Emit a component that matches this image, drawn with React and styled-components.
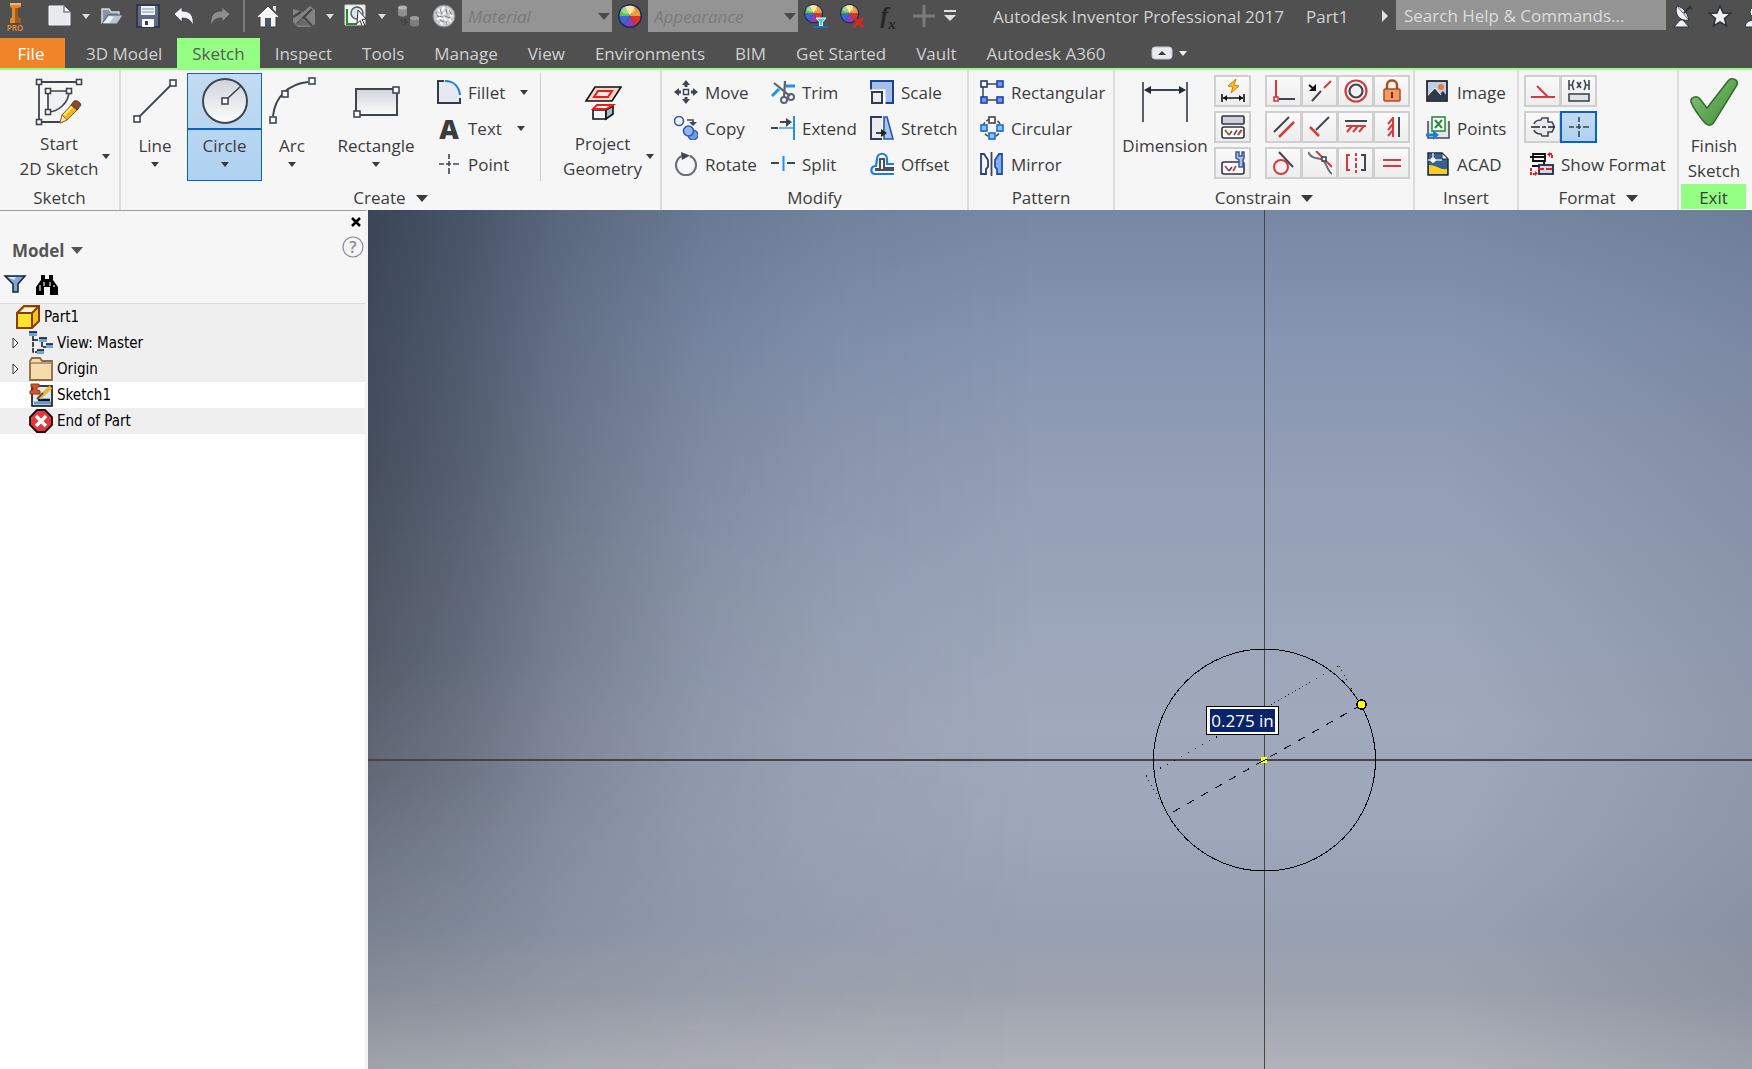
import React, { useState } from 'react';
import styled, { createGlobalStyle } from 'styled-components';

const GlobalStyle = createGlobalStyle`
    * { box-sizing: border-box; }
    body {
        margin: 0;
        overflow: hidden;
        font-family: "Open Sans", "Noto Sans", sans-serif;
        font-size: 17px;
        color: #3c3c3c;
    }
    button, input, select {
        font: inherit;
        color: inherit;
        margin: 0;
        padding: 0;
        border: 0;
        background: none;
    }
    svg { display: block; flex: none; }
`;

const Page = styled.div`
    min-height: 100vh;
    display: flex;
    flex-direction: column;
`;

/* ---------- title bar ---------- */

const TitleBar = styled.header`
    display: flex;
    align-items: flex-start;
    height: 38px;
    background: #505050;
    color: #d2d2d2;
    overflow: hidden;
    white-space: nowrap;
`;

const Logo = styled.div`
    width: 42px;
    height: 32px;
    flex: none;
    padding-left: 6px;
    display: flex;
    align-items: center;
`;

const QuickButton = styled.button`
    width: ${(p) => (p.$arrow ? 16 : 36)}px;
    height: 32px;
    flex: none;
    display: flex;
    align-items: center;
    justify-content: center;
`;

const QuickDivider = styled.span`
    width: 2px;
    height: 32px;
    margin: 0 5px;
    flex: none;
    background: #7d7d7d;
`;

const Parameters = styled.span`
    font-family: "Liberation Serif", serif;
    font-style: italic;
    font-weight: 700;
    font-size: 24px;
    line-height: 28px;
    color: #262626;

    sub {
        font-size: 15px;
        line-height: 1;
    }
`;

const Combo = styled.label`
    position: relative;
    width: 150px;
    height: 32px;
    flex: none;

    select {
        width: 100%;
        height: 100%;
        padding-left: 6px;
        appearance: none;
        background: #949494;
        color: #7a7a7a;
        font-style: italic;
        opacity: 1;
    }
    svg {
        position: absolute;
        right: 2px;
        top: 13px;
        pointer-events: none;
    }
`;

const DocTitle = styled.div`
    display: flex;
    gap: 22px;
    margin-left: 35px;
    line-height: 33px;
`;

const SearchArea = styled.div`
    display: flex;
    align-items: center;
    margin-left: auto;
    width: 370px;
    flex: none;
`;

const SearchInput = styled.input`
    width: 270px;
    height: 30px;
    flex: none;
    margin-left: 8px;
    padding-left: 8px;
    background: #949494;
    align-self: flex-start;

    &::placeholder {
        color: #dcdcdc;
        opacity: 1;
    }
`;

/* ---------- tabs ---------- */

const TabBar = styled.nav`
    display: flex;
    height: 32px;
    background: #505050;
    border-bottom: 2px solid #93ff83;
`;

const Tab = styled.button`
    padding: 0 15px;
    line-height: 31px;
    color: ${(p) => (p.$active ? '#5a5a5a' : '#cfcfcf')};
    background: ${(p) => (p.$active ? '#93ff83' : 'transparent')};
    white-space: nowrap;
`;

const FileTab = styled(Tab)`
    width: 65px;
    padding: 0 18px 0 15px;
    margin-right: 6px;
    background: #f08428;
    color: #fff;
`;

const RibbonToggle = styled.button`
    display: flex;
    align-items: center;
    gap: 6px;
    margin-left: 31px;
`;

/* ---------- ribbon ---------- */

const Ribbon = styled.div`
    display: flex;
    height: 140px;
    background: #f6f6f6;
`;

const Group = styled.section`
    width: ${(p) => p.$w}px;
    flex: ${(p) => (p.$grow ? '1 0 auto' : 'none')};
    display: flex;
    flex-direction: column;
    border-right: ${(p) => (p.$grow ? 0 : 2)}px solid #dcdcdc;
`;

const GroupBody = styled.div`
    display: flex;
    height: 114px;
    padding: 3px 0 3px ${(p) => p.$pad || 0}px;
`;

const GroupTitle = styled.div`
    display: flex;
    align-items: center;
    justify-content: center;
    gap: 10px;
    height: 25px;
    padding-top: 3px;
    line-height: 22px;
    background: ${(p) => (p.$exit ? '#93ff83' : 'transparent')};
    margin: ${(p) => (p.$exit ? '0 6px 0 2px' : '0')};
`;

const Tool = styled.div`
    width: ${(p) => p.$w}px;
    flex: none;
    display: flex;
    flex-direction: column;
    background: ${(p) => (p.$active ? 'linear-gradient(#c3dbf3, #aed1f0)' : 'transparent')};
    outline: ${(p) => (p.$active ? '1px solid #0a62c4' : 'none')};
    outline-offset: -1px;
`;

const ToolIcon = styled.button`
    height: 57px;
    display: flex;
    align-items: center;
    justify-content: center;
    border-bottom: 2px solid ${(p) => (p.$active ? '#0a62c4' : 'transparent')};
`;

const ToolLabel = styled.button`
    flex: 1;
    display: flex;
    flex-direction: column;
    align-items: center;
    gap: 4px;
    padding-top: 3px;
    line-height: 25px;
`;

const BigTool = styled.button`
    width: ${(p) => p.$w}px;
    flex: none;
    display: flex;
    flex-direction: column;
    align-items: center;
    line-height: 25px;
    padding-top: 5px;
    white-space: nowrap;
`;

const BigIcon = styled.span`
    height: 48px;
    display: flex;
    align-items: center;
`;

/* the menu arrow hangs outside the box so that the text stays centred */
const BigLabel = styled.span`
    margin-top: ${(p) => p.$gap || 5}px;
    display: flex;
    align-items: center;
    gap: 4px;

    svg { margin-right: -12px; }
`;

const SmallColumn = styled.div`
    width: ${(p) => p.$w}px;
    margin-left: ${(p) => p.$left || 0}px;
    flex: none;
    padding-top: 1px;
`;

const SmallTool = styled.button`
    display: flex;
    align-items: center;
    height: 36px;
    gap: 7px;
    white-space: nowrap;

    span + svg { margin-left: 8px; }
`;

const LetterIcon = styled.span`
    width: 24px;
    font-size: 27px;
    font-weight: 800;
    text-align: center;
`;

const Separator = styled.span`
    width: 1px;
    height: 108px;
    margin-right: 4px;
    flex: none;
    background: #cdcdcd;
`;

const FormatTools = styled.div`
    display: flex;
    flex-direction: column;
    gap: 2px;
`;

const ButtonGrid = styled.div`
    display: grid;
    grid-template-columns: repeat(${(p) => p.$cols}, 36px);
    grid-auto-rows: 32px;
    gap: 4px 0;
    padding-top: 2px;
    margin-left: ${(p) => p.$left || 0}px;
    align-content: start;
`;

const GridButton = styled.button`
    margin-right: -1px;
    display: flex;
    align-items: center;
    justify-content: center;
    position: relative;
    z-index: ${(p) => (p.$active ? 1 : 0)};
    border: 2px solid ${(p) => (p.$active ? '#0a62c4' : '#cfcfcf')};
    background: ${(p) => (p.$active ? 'linear-gradient(#c3dbf3, #aed1f0)' : 'linear-gradient(#fafafa, #ededed)')};
`;

/* ---------- browser panel ---------- */

const Workspace = styled.main`
    flex: 1;
    display: flex;
`;

const Browser = styled.aside`
    width: 368px;
    flex: none;
    border-top: 1px solid #9c9c9c;
    border-right: 3px solid #f3f3f3;
    background: #fff;
`;

const BrowserHead = styled.div`
    height: 93px;
    padding: 6px 1px 0 12px;
    background: #f6f6f6;
    border-bottom: 1px solid #dcdcdc;
`;

const HeadRow = styled.div`
    display: flex;
    align-items: center;
    justify-content: ${(p) => (p.$end ? 'flex-end' : 'space-between')};
    height: ${(p) => p.$h}px;
    padding-right: ${(p) => (p.$end ? 3 : 0)}px;
`;

const ModelMenu = styled.button`
    display: flex;
    align-items: center;
    gap: 6px;
    padding-top: 6px;
    font-weight: 700;
    font-size: 17px;
    color: #555;
`;

const HeadTools = styled.div`
    display: flex;
    gap: 8px;
    margin: 6px 0 0 -9px;
`;

const Tree = styled.ul`
    list-style: none;
    margin: 0;
    padding: 0;
    color: #000;
    font-family: "DejaVu Sans Condensed", "Noto Sans", sans-serif;
    font-size: 15px;
`;

const TreeRow = styled.li`
    display: flex;
    align-items: center;
    gap: 4px;
    height: 26px;
    padding-left: ${(p) => (p.$root ? 16 : 12)}px;
    background: ${(p) => (p.$plain ? '#fff' : '#efefef')};
`;

const Expander = styled.button`
    width: 13px;
    height: 20px;
    display: flex;
    align-items: center;
`;

/* ---------- graphics window ---------- */

const Viewport = styled.div`
    flex: 1;
    position: relative;
    overflow: hidden;
    background:
        linear-gradient(to right, rgba(60, 70, 90, 0) 78%, rgba(60, 70, 90, 0.16) 100%),
        linear-gradient(#7888a4 0%, #8695b1 15%, #929eb5 30%, #9ca6ba 48%, #a1a9bc 60%, #9ea7b9 72%, #98a1b2 84%, #9ea3ae 91%, #b0b3bb 100%);

    &::before {
        content: '';
        position: absolute;
        inset: 0;
        background: linear-gradient(to right, rgba(10, 16, 24, 0.56), rgba(14, 22, 32, 0.46) 7%, rgba(20, 30, 42, 0.31) 14%, rgba(30, 42, 60, 0.16) 24%, rgba(40, 54, 74, 0.07) 34%, rgba(50, 60, 80, 0) 48%);
        mask-image: linear-gradient(#000 30%, rgba(0, 0, 0, 0.9) 52%, rgba(0, 0, 0, 0.74) 66%, rgba(0, 0, 0, 0.5) 78%, rgba(0, 0, 0, 0.3) 88%, rgba(0, 0, 0, 0.16) 100%);
    }
`;

const Drawing = styled.svg`
    position: absolute;
    inset: 0;
    width: 100%;
    height: 100%;
`;

const DimensionInput = styled.input`
    position: absolute;
    left: 839px;
    top: 497px;
    width: 71px;
    height: 27px;
    border: solid #fff;
    border-width: 2px 3px;
    box-shadow: 0 0 0 1px #000;
    background: #0a246a;
    color: #fff;
    font-size: 17px;
    text-align: center;
`;

/* ---------- icons ---------- */

const ink = '#3f4652';
const red = '#d9393a';
const blue = '#1e90f0';

const Svg = ({ w = 24, h = w, box, children }) => (
    <svg width={w} height={h} viewBox={box || `0 0 ${w} ${h}`} fill="none" stroke={ink} strokeWidth="2" aria-hidden="true">
        {children}
    </svg>
);

const Down = ({ w = 8, color = '#3a3a3a' }) => (
    <svg width={w} height={w / 2 + 1} viewBox="0 0 8 4" preserveAspectRatio="none" aria-hidden="true">
        <path d="M0 0h8L4 4z" fill={color} />
    </svg>
);

const Node = ({ x, y, s = 5, fill = '#fff', stroke = ink }) => (
    <rect x={x - s / 2} y={y - s / 2} width={s} height={s} fill={fill} stroke={stroke} strokeWidth="1.6" />
);

const wheelSlices = [
    ['#f4e06a', 'M6.750 2.900A10.500 10.500 0 0 1 17.250 2.900'],
    ['#ef9a3c', 'M17.250 2.900A10.500 10.500 0 0 1 22.500 12'],
    ['#e0302a', 'M22.500 12A10.500 10.500 0 0 1 17.250 21.100'],
    ['#8a3fb4', 'M17.250 21.100A10.500 10.500 0 0 1 6.750 21.100'],
    ['#3a63dc', 'M6.750 21.100A10.500 10.500 0 0 1 1.500 12'],
    ['#64c04a', 'M1.500 12A10.500 10.500 0 0 1 6.750 2.900'],
];

const ColorWheel = ({ small, children }) => (
    <Svg>
        <g stroke="none" transform={small ? 'scale(0.8)' : undefined}>
            <circle cx="12" cy="12" r="12" fill="#1b2c55" />
            {wheelSlices.map(([fill, arc]) => <path key={fill} d={`${arc}L12 12z`} fill={fill} />)}
            <ellipse cx="10" cy="6" rx="7" ry="4" fill="#fff" opacity="0.400" />
        </g>
        {children}
    </Svg>
);

const icons = {
    logo: (
        <svg width="20" height="32" viewBox="0 0 20 32" aria-hidden="true">
            <path d="M4 3h11v4l-3 1v9l3 2v4H4v-4l2-2V8L4 7z" fill="#e08a2e" />
            <path d="M9 8h3v9l3 2v4H9z" fill="#a85a14" />
            <path d="M4 3h11v2H4z" fill="#f6b266" />
            <text x="9" y="31" textAnchor="middle" fontSize="8" fontWeight="600" fill="#f08c2c">PRO</text>
        </svg>
    ),
    newFile: <Svg><path d="M1 2h15l6 6v13H1z" fill="#e6e9ee" stroke="#f5f5f5" strokeWidth="1" /><path d="M16 2v6h6" fill="#fff" stroke="#7b828d" strokeWidth="1.500" /></Svg>,
    open: <Svg><path d="M2 20V5h7l2 3h8v3" fill="#8a93a3" stroke="#d5d9df" strokeWidth="1.500" /><path d="M2 20l6-9h15l-6 9z" fill="#b9c3d3" stroke="#4a5464" strokeWidth="1" /><path d="M3 19l6-7 5 1-5 6z" fill="#eef1f5" stroke="none" /></Svg>,
    save: <Svg><path d="M1 1h22v22H1z" fill="#5f6b82" stroke="#313a4d" /><path d="M5 2h14v9H5z" fill="#eef1f5" stroke="none" /><path d="M6 5h12M6 8h12" stroke="#8c95a5" strokeWidth="1" /><path d="M6 15h12v8H6z" fill="#fff" stroke="none" /><path d="M9 17h3v4H9z" fill="#313a4d" stroke="none" /></Svg>,
    undo: <Svg><path d="M2 10l8-7v4c9 0 12 5 11 15-2-6-5-8-11-8v4z" fill="#f2f3f5" stroke="#3a3f48" strokeWidth="0.800" /></Svg>,
    redo: <Svg><path d="M22 10l-8-7v4C5 7 2 12 3 22c2-6 5-8 11-8v4z" fill="#8d8d8d" stroke="#474747" strokeWidth="0.800" /></Svg>,
    home: <Svg><path d="M1 13L12 2l11 11h-3v10H4V13z" fill="#f4f4f5" stroke="#343a45" strokeWidth="1" /><path d="M17 2h3v6l-3-3z" fill="#e4e4e6" stroke="none" /><path d="M9 14h6v9H9z" fill="#4f5663" stroke="none" /><path d="M2 13L12 4l10 9" stroke="#fff" strokeWidth="1.500" /></Svg>,
    sketchGrey: <Svg><path d="M1 5l10 3 7-6 5 4v14l-4 3H6l-5-5z" fill="#838383" stroke="none" /><path d="M5 20L20 5M11 12l9 10M1 13l8-5" stroke="#444" strokeWidth="2.200" /><path d="M4 21l14 1-8-8z" fill="#686868" stroke="none" /></Svg>,
    select: <Svg><path d="M1 1h20v20H1z" fill="#f4f4f4" stroke="#d8d8d8" strokeWidth="1" /><path d="M3 5v15h10" stroke="#1f8b34" strokeWidth="2" /><circle cx="13" cy="9" r="6" fill="#dfe3e8" stroke="#555d69" strokeWidth="1.500" /><path d="M14 6l8 9-4 .500 3 6-2.500 1-2.500-6-3 3z" fill="#fff" stroke="#2d3037" strokeWidth="1" /></Svg>,
    returnGrey: <Svg><g stroke="none"><path d="M2 3h9v8c-2 2-7 2-9 0z" fill="#8f8f8f" /><ellipse cx="6.500" cy="3.500" rx="4.500" ry="2" fill="#b4b4b4" /><path d="M14 14h9v7c-2 2-7 2-9 0z" fill="#7e7e7e" /><ellipse cx="18.500" cy="14" rx="4.500" ry="2" fill="#9c9c9c" /></g><path d="M5 15v3h5M8 15l3 3-3 3" stroke="#3a3a3a" strokeWidth="1.200" strokeDasharray="2 1" /></Svg>,
    globe: <Svg><circle cx="12" cy="12" r="11" fill="#c9cbcc" stroke="#7f8386" strokeWidth="1" /><path d="M6 5l3 3M12 3l-2 4M16 5l2 3M4 10l4 1M11 10l4-2M18 11l3 1M5 15l4-1M12 14l3 3M17 15l2 3M9 18l1 3M14 19l2 1M8 12l3 3" stroke="#fff" strokeWidth="2" /><path d="M8 5l2 5M14 5l1 5M6 12l5 1M13 12l5 2M8 16l4 2M17 6l3 5M4 8l2 5M14 17l1 4" stroke="#777b80" strokeWidth="1" /></Svg>,
    adjust: <ColorWheel small><path d="M12 14h10l-3.500 4v4h-3v-4z" fill="#43cdf5" stroke="#fff" strokeWidth="1" /><path d="M9 23h15" stroke="#1c6fc0" /></ColorWheel>,
    clear: <ColorWheel small><path d="M14 14l9 9M23 14l-9 9" stroke="#e0261c" strokeWidth="2.500" /></ColorWheel>,
    plus: <Svg><path d="M12 1v22M1 12h22" stroke="#7a7a7a" strokeWidth="3" /></Svg>,
    more: <Svg w={12}><path d="M0 1h12" stroke="#e0e0e0" /><path d="M0 5h12l-6 6z" fill="#e0e0e0" stroke="none" /></Svg>,
    dish: <Svg><path d="M5 2C2 9 7 18 17 16z" fill="#f0f1f3" stroke="#2d333e" strokeWidth="1" /><path d="M5 2c6 1 10 6 12 14" fill="#d4d7dc" stroke="#2d333e" strokeWidth="1" /><path d="M12 9l6-6M17 2l3 3" stroke="#2d333e" strokeWidth="2" /><path d="M8 16h3l6 7H2z" fill="#f0f1f3" stroke="#2d333e" strokeWidth="1" /></Svg>,
    star: <Svg><path d="M12 2l3 7 7.500 .500-6 5 2 7.500-6.500-4-6.500 4 2-7.500-6-5L9 9z" fill="#eef0f5" stroke="#2b303b" strokeWidth="1.500" /></Svg>,
    user: <Svg><circle cx="12" cy="8" r="6" fill="#eef0f5" stroke="#2b303b" strokeWidth="1" /><path d="M1 23c1-6 5-7 11-7s10 1 11 7z" fill="#eef0f5" stroke="#2b303b" strokeWidth="1" /></Svg>,

    startSketch: (
        <Svg w={48}>
            <path d="M41 4H4v40h22" strokeWidth="1.800" />
            <path d="M34 13H13v21c10 0 21-9 21-21z" fill="#eef0f3" strokeWidth="1.700" />
            <Node x={4} y={4} /><Node x={44} y={4} /><Node x={4} y={44} /><Node x={13} y={13} /><Node x={34} y={13} /><Node x={13} y={34} />
            <path d="M25 45l2-8 11-12 6 5-12 12z" fill="#f3b81f" stroke="#8c5a10" strokeWidth="1" />
            <path d="M29 37l10-10" stroke="#ffe68a" strokeWidth="2" />
            <path d="M36 27l3-4c3-1 6 1 7 4l-4 5z" fill="#8a4a2c" stroke="#6a3a20" strokeWidth="1" />
            <path d="M25 45l2-8 5 5z" fill="#f6e3c4" stroke="#8c5a10" strokeWidth="0.800" />
        </Svg>
    ),
    line: <Svg w={48}><path d="M8 40L40 8" strokeWidth="1.800" /><Node x={6} y={42} s={6} /><Node x={42} y={6} s={6} /></Svg>,
    circle: (
        <Svg w={48}>
            <defs><linearGradient id="disc" x1="0" y1="0" x2="0" y2="1"><stop offset="0" stopColor="#cfd3da" /><stop offset="1" stopColor="#fdfdfd" /></linearGradient></defs>
            <circle cx="24" cy="24" r="22" fill="url(#disc)" strokeWidth="2" />
            <path d="M26 22L40 9" strokeWidth="1.600" /><Node x={24} y={24} s={6} />
        </Svg>
    ),
    arc: <Svg w={48}><path d="M5 39C7 20 20 7 40 5" strokeWidth="2" /><Node x={5} y={43} s={6} /><Node x={17} y={17} s={6} /><Node x={44} y={4} s={6} /></Svg>,
    rectangle: <Svg w={48}><rect x="4" y="12" width="41" height="26" fill="url(#disc)" strokeWidth="2" /><Node x={44} y={13} s={6} /><Node x={5} y={37} s={6} /></Svg>,
    fillet: <Svg><path d="M2 1v22h21v-8C22 8 16 2 9 1z" fill="#e6eaf0" stroke="none" /><path d="M7 1H1v22h22v-5" stroke="#343c4c" /><path d="M8 1c9 0 14 6 15 14" stroke="#1681dc" /></Svg>,
    point: <Svg><path d="M12 2v5M12 9v5M12 16v6M2 12h5M9 12h5M16 12h6" strokeWidth="1.600" /></Svg>,
    project: (
        <Svg w={38}>
            <path d="M11 4h26l-9 14H2z" fill="#f3d8ca" stroke="#111" strokeWidth="1.600" />
            <path d="M14 8h14l-4 6H10z" fill="#fdeee6" stroke="#f01818" strokeWidth="2" />
            <path d="M9 27h13v9H9z" fill="#f2f4f8" stroke="#111" strokeWidth="1.600" />
            <path d="M22 27l7-4v8l-7 5z" fill="#a8b9c8" stroke="#111" strokeWidth="1.600" />
            <path d="M9 26l4-4h16l-7 4z" fill="#fff" stroke="#f01818" strokeWidth="1.800" />
        </Svg>
    ),
    move: <Svg><rect x="9.500" y="9.500" width="5" height="5" strokeWidth="1.500" /><path d="M12 7V3M12 17v4M7 12H3M17 12h4" strokeWidth="3" /><path d="M12 0l4 5H8zM12 24l4-5H8zM0 12l5-4v8zM24 12l-5-4v8z" fill={ink} stroke="none" /></Svg>,
    copy: <Svg><circle cx="5" cy="5" r="4.500" fill="#eef2f8" stroke="#3b5892" strokeWidth="1.600" /><path d="M13 4h6v4" strokeWidth="1.600" /><path d="M15 6h8l-4 4z" fill={ink} stroke="none" /><circle cx="19" cy="19" r="5" fill="#6f9be0" stroke="#2c57b2" strokeWidth="1.200" /><circle cx="14.500" cy="15" r="5" fill="#94b6ea" stroke="#2c57b2" strokeWidth="1.600" /></Svg>,
    rotate: <Svg><path d="M16 4a10 10 0 1 1-8 0" stroke="#6c7078" strokeWidth="2.200" /><path d="M16 4a10 10 0 0 1 2 1" stroke="#6c7078" /><path d="M7 0l9 3.500L8 8z" fill={ink} stroke="none" /></Svg>,
    trim: <Svg><path d="M13 6h11M1 16l7-7" stroke={blue} strokeWidth="3" /><path d="M3 3l16 13M14 1l-1 17" strokeWidth="2.200" stroke="#5a616d" /><circle cx="13" cy="20" r="3" strokeWidth="2" stroke="#5a616d" /><circle cx="20" cy="17" r="3" strokeWidth="2" stroke="#5a616d" /></Svg>,
    extend: <Svg><path d="M0 12h7" /><path d="M8 12h14" stroke="#4ea6f2" strokeWidth="1.600" /><path d="M23 0v24" stroke={blue} /><path d="M9 6h8" /><path d="M15 2l6 4-6 5z" fill={ink} stroke="none" /></Svg>,
    split: <Svg><path d="M0 11h8M16 11h8" strokeWidth="1.800" /><path d="M12.500 4v15" stroke={blue} /></Svg>,
    scale: <Svg><rect x="1" y="1" width="22" height="22" fill="#a4c0e4" stroke="#1c3f9c" /><rect x="1" y="11" width="13" height="12" fill="#fff" stroke="#fff" strokeWidth="3" /><rect x="2" y="12" width="10" height="11" fill="#e9ebef" stroke="#343c4c" /></Svg>,
    stretch: <Svg><path d="M12 1H1v22h11" fill="#e9ebef" stroke="#343c58" /><path d="M14 1h3l6 22h-9z" fill="#a9c6ea" stroke="#2853b4" strokeWidth="1.600" /><path d="M6 17h6" /><path d="M11 13l6 4-6 4z" fill="#222" stroke="none" /></Svg>,
    offset: <Svg><path d="M24 22H5c-5 0-5-8 1-8l1-7c0-7 10-7 10 0v5h7" stroke="#1c7fd6" strokeWidth="2.200" /><path d="M24 18H6v-1h4V7h4v9h10" stroke="#4a505a" strokeWidth="2" /></Svg>,
    rectangular: <Svg><path d="M7 4h12M3 6v14M7 20h12" strokeWidth="1.500" /><Node x={4} y={4} s={6} stroke="#203a6c" /><Node x={20} y={4} s={6} fill="#6e9be8" stroke="#1941a5" /><Node x={4} y={20} s={6} fill="#6e9be8" stroke="#1941a5" /><Node x={20} y={20} s={6} fill="#6e9be8" stroke="#1941a5" /></Svg>,
    circular: <Svg><circle cx="12" cy="12" r="9" strokeWidth="1.500" strokeDasharray="4 2" /><Node x={12} y={4} s={6} /><Node x={4} y={12} s={6} fill="#8cc2ef" stroke="#1a6fc0" /><Node x={20} y={12} s={6} fill="#8cc2ef" stroke="#1a6fc0" /><Node x={12} y={20} s={6} fill="#8cc2ef" stroke="#1a6fc0" /></Svg>,
    mirror: <Svg><path d="M1 2v20h5v-5l2-2V8L4 2z" fill="#f3f5f8" stroke="#27406f" strokeWidth="1.800" /><path d="M11.500 0v24" strokeWidth="1.800" /><path d="M22 2v20h-5v-5l-2-2V8l4-6z" fill="#88aee4" stroke="#1f4fb4" strokeWidth="1.800" /></Svg>,
    dimension: <Svg w={48} h={48}><path d="M2 4v40M46 4v40" strokeWidth="2" stroke="#5a616b" /><path d="M4 12h40" strokeWidth="2" /><path d="M3 12l7-4v8zM45 12l-7-4v8z" fill="#222b36" stroke="none" /></Svg>,
    autoDim: <Svg><path d="M1 15v8M23 15v8M2 19h20" stroke="#111" strokeWidth="1.600" /><path d="M2 19l4-3v6zM22 19l-4-3v6z" fill="#111" stroke="none" /><path d="M15 0L7 7l5 1-2 6 8-7-5-1z" fill="#ffbe1e" stroke="#e07c10" strokeWidth="1" /></Svg>,
    showCon: <Svg><rect x="1" y="1" width="22" height="8" rx="1" fill="#cfd2da" stroke="#2c3340" strokeWidth="1.600" /><rect x="1" y="12" width="22" height="11" rx="2" fill="#fff" stroke="#2c3340" strokeWidth="1.600" /><path d="M8 20l3-4M13 20l3-5M17 20l3-5" stroke="#4a505a" strokeWidth="1.500" /><path d="M4 15l4 5M17 20l4-5" stroke="#c8501e" strokeWidth="2" /></Svg>,
    conSettings: <Svg><rect x="1" y="11" width="22" height="12" rx="2" fill="#fff" stroke="#2c3340" strokeWidth="1.600" /><path d="M4 15l4 5M12 20l3-5" stroke={red} strokeWidth="1.800" /><path d="M8 20l3-4" strokeWidth="1.500" /><path d="M15 1v6l3 2v7h4V9l1-2V1h-2v4h-3V1z" fill="#a9c0df" stroke="#3b5c8c" strokeWidth="1.500" /></Svg>,
    coincident: <Svg><path d="M4 1v17" stroke={red} /><path d="M7 20h16" /><Node x={4} y={20} s={4} stroke={red} /></Svg>,
    collinear: <Svg><path d="M4 22l9-10" /><path d="M16 9l7-7" stroke={red} /><path d="M1 6l6 5" stroke="#111" /><path d="M8 5v7H1z" fill="#111" stroke="none" /></Svg>,
    concentric: <Svg><circle cx="12" cy="12" r="10.500" stroke={red} strokeWidth="2.200" /><circle cx="12" cy="12" r="6.500" strokeWidth="2.200" /></Svg>,
    fix: <Svg><path d="M7 11V6c0-6 10-6 10 0v5" stroke="#b4491e" strokeWidth="2.500" /><rect x="4" y="10" width="16" height="12" rx="1" fill="#ee9a6a" stroke="#b4491e" strokeWidth="1.500" /><path d="M12 13v6" stroke="#7a2c10" /></Svg>,
    parallel: <Svg><path d="M2 17L17 2" /><path d="M7 22L22 7" stroke={red} strokeWidth="2.500" /></Svg>,
    perpendicular: <Svg><path d="M8 15L21 2" /><path d="M2 12l9 9" stroke={red} strokeWidth="2.500" /></Svg>,
    horizontal: <Svg><path d="M1 6h22" /><path d="M2 11h20M8 11l-5 6M14 11l-5 6M20 11l-5 6" stroke={red} /></Svg>,
    vertical: <Svg><path d="M19 2v20" /><path d="M13 2v20M13 3l-5 6M13 9l-5 6M13 15l-5 6" stroke={red} /></Svg>,
    tangent: <Svg><circle cx="9" cy="16" r="7" stroke={red} /><path d="M7 1l14 15" /></Svg>,
    smooth: <Svg><path d="M0 1c4 7 8 6 13 7s6 12 11 15" stroke="#6a707a" /><path d="M8 0l16 16" stroke={red} /><Node x={16} y={8} s={4} /></Svg>,
    symmetric: <Svg><path d="M6 4H3v15h3" stroke={red} /><path d="M12 2v3M12 7v3M12 12v5M12 19v3" stroke={red} /><path d="M17 4h4v15h-4" /></Svg>,
    equal: <Svg><path d="M3 9h18M3 15h18" stroke={red} /></Svg>,
    image: <Svg><rect x="1" y="1" width="20" height="20" fill="#bcd0ec" stroke="#111" strokeWidth="1.600" /><circle cx="15" cy="7" r="3" fill="#ee7a32" stroke="none" /><path d="M2 16l7-8 5 6 3-3 4 5v4H2z" fill="#2f3a4e" stroke="none" /><path d="M2 15l7-7 6 7" stroke="#fff" strokeWidth="1" /></Svg>,
    points: <Svg><path d="M2 5v17h21V5" fill="#e4e7ea" stroke={ink} strokeWidth="1.500" /><rect x="6" y="1" width="13" height="14" fill="#fff" stroke="#2d8c3c" strokeWidth="1.600" /><path d="M9 4l7 8M16 4l-7 8" stroke="#2d8c3c" strokeWidth="2.200" /><path d="M0 19h9" stroke="#1c7fdc" strokeWidth="3" /><path d="M7 14l6 5-6 5z" fill="#1c7fdc" stroke="none" /></Svg>,
    acad: <Svg><path d="M2 1h14l6 6v16H2z" fill="#37618e" stroke="#222c3c" strokeWidth="1.500" /><path d="M3 13c8 0 10 5 18 4v5H3z" fill="#f6cf25" stroke="none" /><path d="M7 1v10M2 8h14" stroke="#cfe2f2" strokeWidth="1.500" /><circle cx="7" cy="8" r="2.500" fill="#fff" stroke="none" /><path d="M16 1v6h6z" fill="#eef1f5" stroke="#222c3c" strokeWidth="1" /></Svg>,
    construction: <Svg><path d="M0 18h24M6 7l11 11" stroke={red} /></Svg>,
    driven: <Svg><path d="M2 1v10M22 1v10M2 6h3M19 6h3M7 1c-2 3-2 7 0 10M17 1c2 3 2 7 0 10M10 3l4 6M14 3l-4 6" strokeWidth="1.600" /><rect x="2" y="15" width="20" height="7" fill="#dfe2e8" strokeWidth="1.600" /></Svg>,
    centerline: <Svg><path d="M3 9c1-3 4-4 7-4l1-2h6v4h4c1 2 2 3 2 5s-1 3-2 5h-4v4h-6l-1-2c-3 0-6-1-7-4" fill="#e6e9ed" strokeWidth="1.600" /><path d="M0 12h9M11 12h4M17 12h7" strokeWidth="1.600" stroke="#222" /></Svg>,
    showFormat: <Svg><path d="M3 2h12v7H3zM0 5h16M2 9h12v5H2" stroke="#111" strokeWidth="1.800" /><rect x="9" y="13" width="14" height="9" fill="#cfd9e8" stroke="#1e2c4c" strokeWidth="1.800" /><path d="M8 17h16" stroke="#e8201c" strokeDasharray="6 2" /><path d="M19 2h3v5M1 16v6h4" stroke="#e8201c" strokeDasharray="3 1" /><path d="M20 0v5l-3-2.500zM5 19v5l3-2.500z" fill="#e8201c" stroke="none" /></Svg>,
    finish: (
        <Svg w={48}>
            <defs><linearGradient id="tick" x1="0" y1="0" x2="1" y2="1"><stop offset="0" stopColor="#8fc780" /><stop offset="1" stopColor="#3a8a30" /></linearGradient></defs>
            <path d="M1 24c-1-5 6-7 9-3l7 9L38 3c3-4 11-2 9 4L24 44c-2 4-6 4-9 1C9 38 4 32 1 24z" fill="url(#tick)" stroke="#2f6e2a" strokeWidth="1.500" />
        </Svg>
    ),

    filter: <Svg><path d="M2 3h20l-7 8v8h-5v-8z" fill="#7fa9d4" stroke="#17202c" strokeWidth="1.500" /><path d="M5 4h8l-2 3z" fill="#d9ecfb" stroke="none" /></Svg>,
    binoculars: <Svg><path d="M6 2h4v4h4V2h4v5l5 7v8h-8v-8h-6v8H1v-8l5-7z" fill="#000" stroke="none" /><path d="M5 12v6M9 9v4M15 9v4M19 12v2" stroke="#f4f0b8" strokeWidth="1.200" /></Svg>,
    part: <Svg><path d="M1 8l7-7h15v15l-7 7H1z" fill="#f0c81c" stroke="#8c3a08" /><path d="M3 8l6-5h12l-5 5z" fill="#fff8dc" stroke="none" /><path d="M2 9h13v13H2z" fill="#fde22e" stroke="none" /><path d="M1 8h15v15M16 8l7-7" stroke="#8c3a08" /></Svg>,
    view: <Svg><path d="M4 5v16h5M4 9h6M13 11v5h4" stroke="#111" strokeWidth="1.500" strokeDasharray="5 1" /><g fill="#6fa6e2" stroke="none"><rect x="0" y="1" width="8" height="4" /><rect x="10" y="7" width="8" height="4" /><rect x="17" y="13" width="7" height="4" /><rect x="8" y="19" width="7" height="4" /></g><path d="M0 1h8M10 7h8M17 13h7M8 19h7" stroke="#111" strokeWidth="1.500" /></Svg>,
    folder: <Svg><path d="M1 23V4l2-3h8l2 3h10v19z" fill="#f7dcab" stroke="#8a6a48" strokeWidth="1.800" /><path d="M2 6h20" stroke="#8a6a48" strokeWidth="1.200" /></Svg>,
    sketchItem: <Svg><rect x="3" y="3" width="20" height="20" fill="#dbe8f5" stroke="#111" strokeWidth="1.600" /><path d="M5 20h17" stroke="#5a9ad8" strokeWidth="3" /><path d="M9 17h12" stroke="#111" strokeWidth="2.500" /><path d="M10 15L22 4" stroke="#f0b42c" strokeWidth="4" /><path d="M8 16l6-6" stroke="#555" strokeWidth="2" /><path d="M2 1h8v3H8v3l3 1v3H1V8l3-1V4H2z" fill="#d8562c" stroke="#9c3210" strokeWidth="1" /></Svg>,
    end: <Svg><path d="M8 1h8l7 7v8l-7 7H8l-7-7V8z" fill="#e8343c" stroke="#111" strokeWidth="1.800" /><path d="M7 7l10 10M17 7L7 17" stroke="#fff" strokeWidth="3.500" /></Svg>,
};

const tabs = ['3D Model', 'Sketch', 'Inspect', 'Tools', 'Manage', 'View', 'Environments', 'BIM', 'Get Started', 'Vault', 'Autodesk A360'];

const createTools = [
    { label: 'Line', icon: icons.line, width: 64 },
    { label: 'Circle', icon: icons.circle, width: 75 },
    { label: 'Arc', icon: icons.arc, width: 60 },
    { label: 'Rectangle', icon: icons.rectangle, width: 108 },
];

const modifyColumns = [
    { width: 97, tools: [['Move', icons.move], ['Copy', icons.copy], ['Rotate', icons.rotate]] },
    { width: 99, tools: [['Trim', icons.trim], ['Extend', icons.extend], ['Split', icons.split]] },
    { width: 92, tools: [['Scale', icons.scale], ['Stretch', icons.stretch], ['Offset', icons.offset]] },
];

const constraints = [
    'coincident', 'collinear', 'concentric', 'fix',
    'parallel', 'perpendicular', 'horizontal', 'vertical',
    'tangent', 'smooth', 'symmetric', 'equal',
];

const treeItems = [
    { label: 'View: Master', icon: icons.view, expandable: true },
    { label: 'Origin', icon: icons.folder, expandable: true },
    { label: 'Sketch1', icon: icons.sketchItem, plain: true },
    { label: 'End of Part', icon: icons.end },
];

const Quick = ({ name }) => <QuickButton aria-label={name}>{icons[name]}</QuickButton>;

const QuickArrow = ({ label }) => (
    <QuickButton $arrow aria-label={label}><Down color="#dcdcdc" /></QuickButton>
);

const ComboBox = ({ name }) => (
    <Combo>
        <select aria-label={name} disabled defaultValue={name}>
            <option>{name}</option>
        </select>
        <Down w={12} color="#4a4a4a" />
    </Combo>
);

const SmallTools = ({ width, left, tools }) => (
    <SmallColumn $w={width} $left={left}>
        {tools.map(([label, icon, menu]) => (
            <SmallTool key={label}>
                {icon}
                <span>{label}</span>
                {menu && <Down />}
            </SmallTool>
        ))}
    </SmallColumn>
);

const App = () => {
    const [activeTab, setActiveTab] = useState('Sketch');
    const [activeTool, setActiveTool] = useState('Circle');
    const [diameter, setDiameter] = useState('0.275 in');

    return (
        <Page>
            <GlobalStyle />
            <TitleBar>
                <Logo>{icons.logo}</Logo>
                <Quick name="newFile" />
                <QuickArrow label="New options" />
                <Quick name="open" />
                <Quick name="save" />
                <Quick name="undo" />
                <Quick name="redo" />
                <QuickDivider />
                <Quick name="home" />
                <Quick name="sketchGrey" />
                <QuickArrow label="Update options" />
                <Quick name="select" />
                <QuickArrow label="Select options" />
                <Quick name="returnGrey" />
                <Quick name="globe" />
                <ComboBox name="Material" />
                <QuickButton aria-label="Appearance browser"><ColorWheel /></QuickButton>
                <ComboBox name="Appearance" />
                <Quick name="adjust" />
                <Quick name="clear" />
                <QuickButton aria-label="Parameters">
                    <Parameters>f<sub>x</sub></Parameters>
                </QuickButton>
                <Quick name="plus" />
                <QuickButton $arrow aria-label="Customize">{icons.more}</QuickButton>
                <DocTitle>
                    <span>Autodesk Inventor Professional 2017</span>
                    <span>Part1</span>
                </DocTitle>
                <SearchArea>
                    <svg width="6" height="12" viewBox="0 0 6 12"><path d="M0 0l6 6-6 6z" fill="#e0e0e0" /></svg>
                    <SearchInput aria-label="Search" placeholder="Search Help & Commands..." />
                    <Quick name="dish" />
                    <Quick name="star" />
                    <Quick name="user" />
                </SearchArea>
            </TitleBar>

            <TabBar>
                <FileTab>File</FileTab>
                {tabs.map((tab) => (
                    <Tab key={tab} $active={tab === activeTab} onClick={() => setActiveTab(tab)}>{tab}</Tab>
                ))}
                <RibbonToggle aria-label="Minimize ribbon">
                    <svg width="22" height="14" viewBox="0 0 22 14">
                        <rect x="1" y="1" width="20" height="12" rx="3" fill="#e8eaf0" stroke="#c3c7d0" />
                        <path d="M7 9h8l-4-4z" fill="#3a3a3a" />
                    </svg>
                    <Down color="#f0f0f0" />
                </RibbonToggle>
            </TabBar>

            <Ribbon>
                <Group $w={121}>
                    <GroupBody>
                        <BigTool $w={118}>
                            <BigIcon>{icons.startSketch}</BigIcon>
                            <BigLabel>
                                <span>Start<br />2D Sketch</span>
                                <Down />
                            </BigLabel>
                        </BigTool>
                    </GroupBody>
                    <GroupTitle>Sketch</GroupTitle>
                </Group>

                <Group $w={541}>
                    <GroupBody $pad={2}>
                        {createTools.map(({ label, icon, width }) => {
                            const active = label === activeTool;
                            return (
                                <Tool key={label} $w={width} $active={active} onClick={() => setActiveTool(label)}>
                                    <ToolIcon $active={active} aria-label={label}>{icon}</ToolIcon>
                                    <ToolLabel>{label}<Down /></ToolLabel>
                                </Tool>
                            );
                        })}
                        <SmallTools
                            left={7}
                            width={103}
                            tools={[
                                ['Fillet', icons.fillet, true],
                                ['Text', <LetterIcon key="letter">A</LetterIcon>, true],
                                ['Point', icons.point],
                            ]}
                        />
                        <Separator />
                        <BigTool $w={115}>
                            <BigIcon>{icons.project}</BigIcon>
                            <BigLabel>
                                <span>Project<br />Geometry</span>
                                <Down />
                            </BigLabel>
                        </BigTool>
                    </GroupBody>
                    <GroupTitle>Create<Down w={12} /></GroupTitle>
                </Group>

                <Group $w={307}>
                    <GroupBody $pad={12}>
                        {modifyColumns.map((column) => (
                            <SmallTools key={column.width} {...column} />
                        ))}
                    </GroupBody>
                    <GroupTitle>Modify</GroupTitle>
                </Group>

                <Group $w={146}>
                    <GroupBody $pad={11}>
                        <SmallTools
                            width={130}
                            tools={[['Rectangular', icons.rectangular], ['Circular', icons.circular], ['Mirror', icons.mirror]]}
                        />
                    </GroupBody>
                    <GroupTitle>Pattern</GroupTitle>
                </Group>

                <Group $w={300}>
                    <GroupBody $pad={1}>
                        <BigTool $w={98}>
                            <BigIcon>{icons.dimension}</BigIcon>
                            <BigLabel $gap={7}>Dimension</BigLabel>
                        </BigTool>
                        <ButtonGrid $cols={1}>
                            <GridButton aria-label="Automatic dimensions">{icons.autoDim}</GridButton>
                            <GridButton aria-label="Show constraints">{icons.showCon}</GridButton>
                            <GridButton aria-label="Constraint settings">{icons.conSettings}</GridButton>
                        </ButtonGrid>
                        <ButtonGrid $cols={4} $left={15}>
                            {constraints.map((name) => (
                                <GridButton key={name} aria-label={name}>{icons[name]}</GridButton>
                            ))}
                        </ButtonGrid>
                    </GroupBody>
                    <GroupTitle>Constrain<Down w={12} /></GroupTitle>
                </Group>

                <Group $w={104}>
                    <GroupBody $pad={11}>
                        <SmallTools
                            width={90}
                            tools={[['Image', icons.image], ['Points', icons.points], ['ACAD', icons.acad]]}
                        />
                    </GroupBody>
                    <GroupTitle>Insert</GroupTitle>
                </Group>

                <Group $w={160}>
                    <GroupBody $pad={5}>
                        <FormatTools>
                            <ButtonGrid $cols={2}>
                                <GridButton aria-label="Construction">{icons.construction}</GridButton>
                                <GridButton aria-label="Driven dimension">{icons.driven}</GridButton>
                                <GridButton aria-label="Centerline">{icons.centerline}</GridButton>
                                <GridButton aria-label="Center point" $active>{icons.point}</GridButton>
                            </ButtonGrid>
                            <SmallTools left={6} width={140} tools={[['Show Format', icons.showFormat]]} />
                        </FormatTools>
                    </GroupBody>
                    <GroupTitle>Format<Down w={12} /></GroupTitle>
                </Group>

                <Group $w={73} $grow>
                    <GroupBody>
                        <BigTool $w={70}>
                            <BigIcon>{icons.finish}</BigIcon>
                            <BigLabel $gap={7}>Finish<br />Sketch</BigLabel>
                        </BigTool>
                    </GroupBody>
                    <GroupTitle $exit>Exit</GroupTitle>
                </Group>
            </Ribbon>

            <Workspace>
                <Browser>
                    <BrowserHead>
                        <HeadRow $end $h={10}>
                            <button aria-label="Close">
                                <Svg w={10}><path d="M1 1l8 8M9 1L1 9" stroke="#000" strokeWidth="2.500" /></Svg>
                            </button>
                        </HeadRow>
                        <HeadRow $h={40}>
                            <ModelMenu>Model<Down w={12} color="#555" /></ModelMenu>
                            <button aria-label="Help">
                                <svg width="22" height="22" viewBox="0 0 22 22">
                                    <circle cx="11" cy="11" r="10" fill="none" stroke="#8c8c8c" strokeWidth="1.200" />
                                    <text x="11" y="17" textAnchor="middle" fontSize="16" fontWeight="600" fill="#8c8c8c">?</text>
                                </svg>
                            </button>
                        </HeadRow>
                        <HeadTools>
                            <button aria-label="Filter">{icons.filter}</button>
                            <button aria-label="Find">{icons.binoculars}</button>
                        </HeadTools>
                    </BrowserHead>
                    <Tree>
                        <TreeRow $root>{icons.part}Part1</TreeRow>
                        {treeItems.map((item) => (
                            <TreeRow key={item.label} $plain={item.plain}>
                                <Expander aria-label={`Expand ${item.label}`} disabled={!item.expandable}>
                                    {item.expandable && (
                                        <svg width="7" height="12" viewBox="0 0 7 12"><path d="M1 1l5 5-5 5z" fill="#fff" stroke="#333" /></svg>
                                    )}
                                </Expander>
                                {item.icon}
                                {item.label}
                            </TreeRow>
                        ))}
                    </Tree>
                </Browser>

                <Viewport>
                    <Drawing shapeRendering="crispEdges" fill="none" stroke="#000">
                        <path d="M0 550h4000" stroke="#454545" strokeWidth="2" />
                        <path d="M896.500 0v3000" stroke="#454545" />
                        <circle cx="896.500" cy="550" r="111" />
                        <path d="M805 602L993 495" strokeDasharray="8 8" />
                        <path d="M903 495l68-39" strokeDasharray="1 3" />
                        <path d="M778 566l76-42" strokeDasharray="1 7" />
                        <path d="M778 566l16 28M971 456l14 25" strokeDasharray="1 4" />
                        <rect x="893" y="547" width="6" height="6" fill="#ffff00" stroke="none" />
                        <path d="M893 552l6-3" />
                        <circle cx="993.500" cy="494.500" r="4.500" fill="#ffff00" strokeWidth="1.500" />
                    </Drawing>
                    <DimensionInput
                        aria-label="Diameter"
                        value={diameter}
                        onChange={(e) => setDiameter(e.target.value)}
                    />
                </Viewport>
            </Workspace>
        </Page>
    );
};

export default App;
